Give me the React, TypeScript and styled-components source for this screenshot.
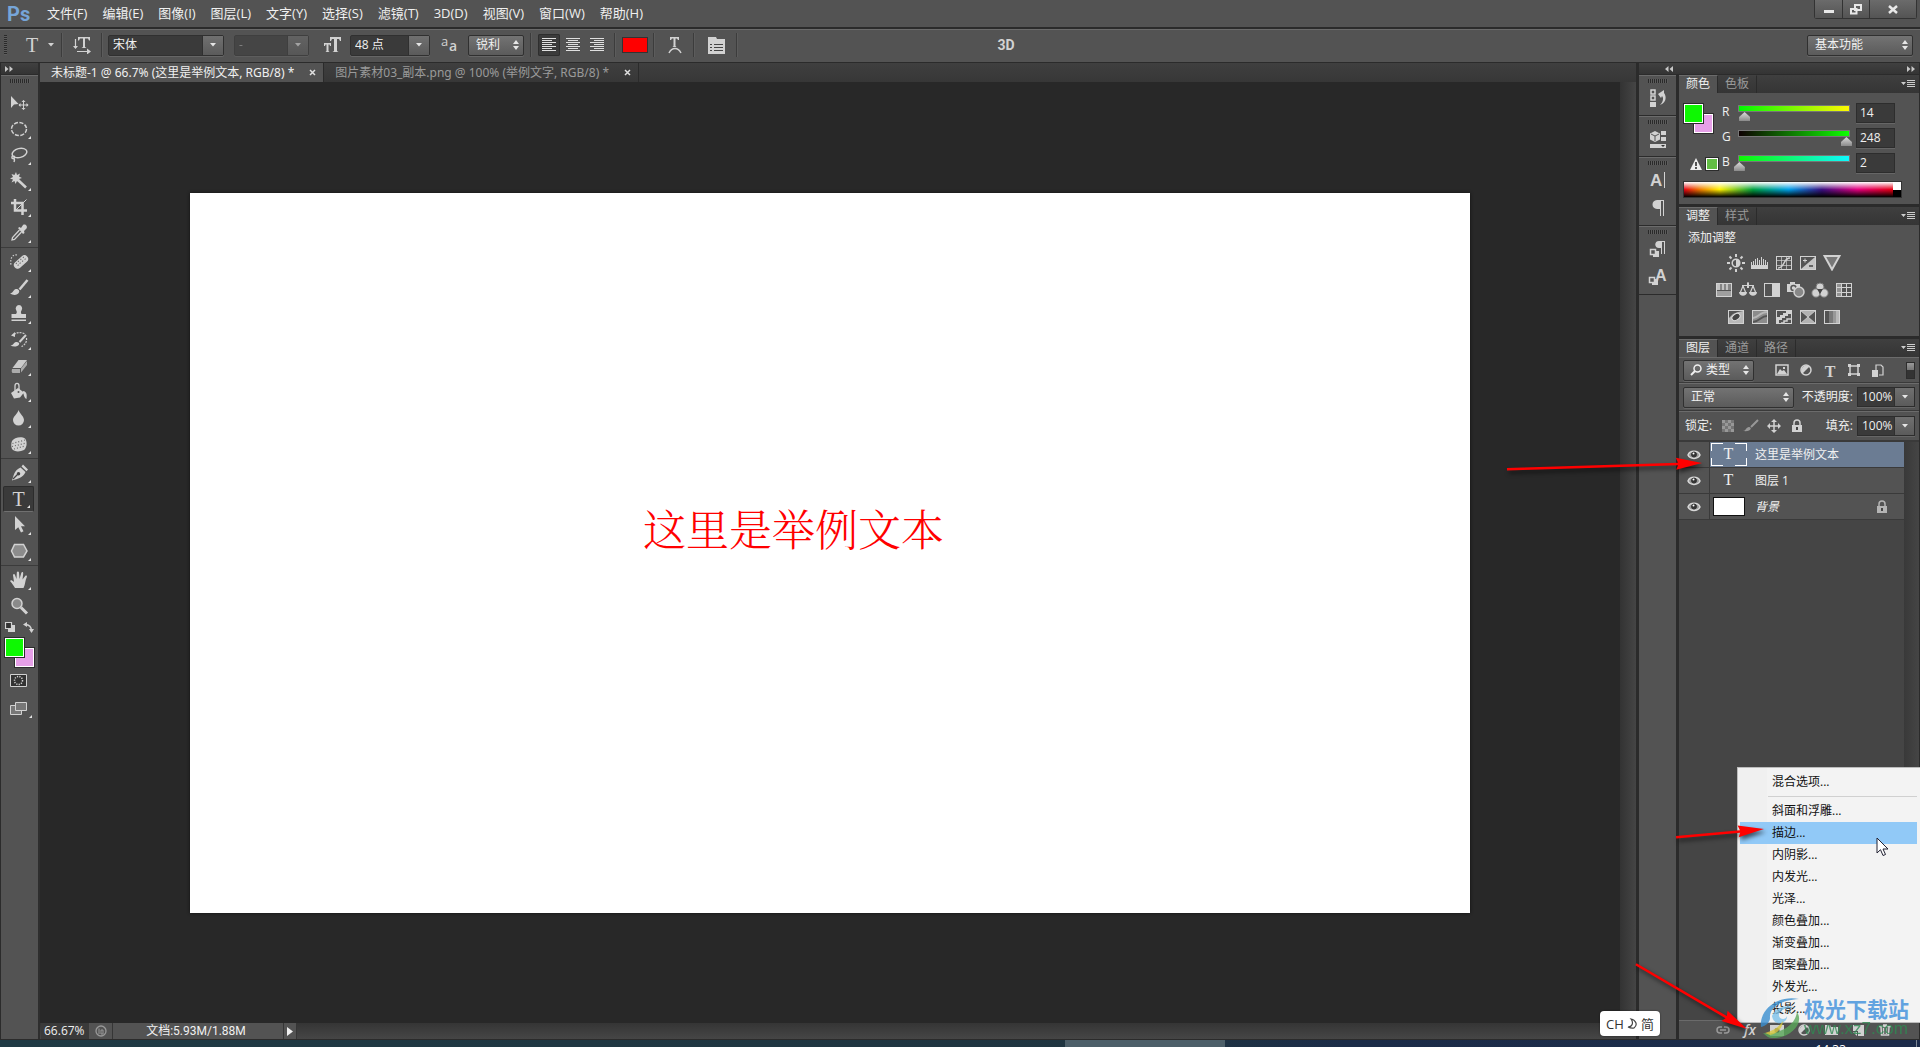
import React from 'react';
import styled, { createGlobalStyle, css } from 'styled-components';

const c = {
  panel: '#535353',
  edge: '#2b2b2b',
  light: '#6b6b6b',
  field: '#3a3a3a',
  icon: '#d2d2d2',
  text: '#f0f0f0',
  dim: '#9a9a9a',
};

const Global = createGlobalStyle`
  * { box-sizing: border-box; }
  html, body, #root { height: 100%; }
  body {
    margin: 0;
    overflow: hidden;
    background: ${c.edge};
    color: ${c.text};
    font: 12px/16px "Open Sans", "Noto Sans CJK SC", sans-serif;
  }
  button, input, select { font: inherit; color: inherit; margin: 0; }
  button { padding: 0; border: 0; background: none; }
  ul { margin: 0; padding: 0; list-style: none; }
  svg { display: block; }
`;

/* ---------- frame ---------- */

const App = styled.div`
  position: relative;
  display: flex;
  flex-direction: column;
  height: 100vh;
  overflow: hidden;
`;

const MenuBar = styled.header`
  display: flex;
  align-items: center;
  height: 29px;
  flex: none;
  padding-left: 7px;
  background: ${c.panel};
  border-bottom: 2px solid ${c.edge};
`;

const Logo = styled.span`
  width: 33px;
  font: 700 20px/24px Roboto, sans-serif;
  color: #76a5d8;
`;

const MenuList = styled.nav`
  display: flex;
  align-items: center;
  padding-bottom: 2px;
  font-size: 13px;
`;

const MenuEntry = styled.button`
  padding: 0 8px 0 7px;
  white-space: nowrap;
`;

const WindowButtons = styled.div`
  display: flex;
  align-self: flex-start;
  margin-left: auto;
  margin-right: 3px;
  height: 19px;
  border: 1px solid #333;
  border-top: 0;
  border-radius: 0 0 3px 3px;
`;

const WindowButton = styled.button<{ $w: number }>`
  display: grid;
  place-items: center;
  width: ${(p) => p.$w}px;
  background: linear-gradient(#6b6b6b, #545454);
  color: #e8e8e8;
  & + & { border-left: 1px solid #333; }
`;

const OptionsBar = styled.div`
  display: flex;
  align-items: center;
  flex: none;
  height: 34px;
  padding: 0 7px 2px 4px;
  background: ${c.panel};
  border-top: 1px solid ${c.light};
  border-bottom: 1px solid ${c.edge};
`;

const Grip = styled.span<{ $upright?: boolean }>`
  display: block;
  flex: none;
  ${(p) =>
    p.$upright
      ? css`width: 3px; height: 20px; background: repeating-linear-gradient(#2a2a2a 0 1px, #5c5c5c 1px 2px);`
      : css`width: 20px; height: 4px; background: repeating-linear-gradient(90deg, #2a2a2a 0 1px, #5c5c5c 1px 2px);`}
`;

const Divider = styled.span`
  width: 2px;
  height: 24px;
  flex: none;
  background: #3c3c3c;
  border-right: 1px solid #5c5c5c;
`;

const Slot = styled.button<{ $w: number }>`
  display: flex;
  align-items: center;
  justify-content: center;
  gap: 10px;
  width: ${(p) => p.$w}px;
  height: 24px;
  flex: none;
  color: ${c.icon};
`;

const TypeSlot = styled(Slot)`padding-left: 12px;`;

const ThreeD = styled(Slot)`
  margin-left: 246px;
  font: 700 14px/16px Roboto, sans-serif;
`;

const Row = styled.div<{ $gap?: number; $pad?: number }>`
  display: flex;
  align-items: center;
  gap: ${(p) => p.$gap ?? 0}px;
  padding: 0 ${(p) => p.$pad ?? 0}px;
`;

const PushRight = styled(Row)`margin-left: auto;`;

const AlignButton = styled.button<{ $on?: boolean }>`
  display: grid;
  place-items: center;
  width: 22px;
  height: 22px;
  border-radius: 2px;
  color: #e0e0e0;
  ${(p) => p.$on && css`background: #3b3b3b; box-shadow: inset 0 0 0 1px #2e2e2e;`}
`;

const TextColour = styled.button`
  width: 26px;
  height: 16px;
  background: #f00;
  border: 1px solid #333;
`;

/* ---------- drop-downs ---------- */

const SelectFrame = styled.span<{ $w: number; $kind: 'field' | 'button'; $off?: boolean }>`
  display: grid;
  grid-template-columns: minmax(0, 1fr) ${(p) => (p.$kind === 'field' ? 21 : 14)}px;
  flex: none;
  width: ${(p) => p.$w}px;
  height: 21px;
  border: 1px solid #303030;
  border-radius: 2px;
  background: ${(p) => (p.$kind === 'field' ? c.field : 'linear-gradient(#737373, #5b5b5b)')};
  box-shadow: 0 1px 0 #666;
  opacity: ${(p) => (p.$off ? 0.55 : 1)};
  & > select {
    grid-area: 1 / 1 / 2 / 3;
    appearance: none;
    width: 100%;
    border: 0;
    padding: 0 0 0 ${(p) => (p.$kind === 'field' ? 4 : 7)}px;
    background: none;
    outline: 0;
    opacity: 1;
  }
  & > select:disabled { color: #aaa; }
`;

const ArrowCell = styled.span<{ $plain?: boolean }>`
  grid-area: 1 / 2 / 2 / 3;
  display: grid;
  place-items: center;
  pointer-events: none;
  color: #e6e6e6;
  ${(p) => !p.$plain && css`background: linear-gradient(#707070, #5b5b5b); border-left: 1px solid #303030;`}
`;

const Down = () => (
  <svg width="6" height="4" viewBox="0 0 6 4"><path d="M0 0h6L3 3.500z" fill="currentColor" /></svg>
);
const UpDown = () => (
  <svg width="6" height="10" viewBox="0 0 6 10"><path d="M0 4 3 0l3 4zM0 6h6l-3 4z" fill="currentColor" /></svg>
);

type SelProps = { label: string; w: number; kind?: 'field' | 'button'; value: string; disabled?: boolean };
const Select = ({ label, w, kind = 'button', value, disabled }: SelProps) => (
  <SelectFrame $w={w} $kind={kind} $off={disabled}>
    <select aria-label={label} disabled={disabled} defaultValue={value}><option>{value}</option></select>
    <ArrowCell $plain={kind === 'button'}>{kind === 'field' ? <Down /> : <UpDown />}</ArrowCell>
  </SelectFrame>
);

/* ---------- workspace ---------- */

const Workspace = styled.div`
  display: flex;
  flex: 1;
  min-height: 0;
  border-bottom: 1px solid ${c.edge};
`;

const ToolColumn = styled.aside`
  display: flex;
  flex-direction: column;
  align-items: center;
  flex: none;
  width: 40px;
  background: ${c.panel};
  border-left: 1px solid ${c.edge};
  border-right: 2px solid #2e2e2e;
`;

const ColumnHead = styled.div`
  display: flex;
  align-items: center;
  justify-content: space-between;
  align-self: stretch;
  flex: none;
  height: 12px;
  padding: 0 4px;
  color: #c8c8c8;
  background: linear-gradient(#404040, #343434);
  border-bottom: 1px solid ${c.edge};
`;

const ToolGrip = styled.div`
  display: flex;
  justify-content: center;
  align-self: stretch;
  height: 15px;
  padding-top: 3px;
  border-top: 1px solid ${c.light};
`;

const ToolGroup = styled.div`
  display: flex;
  flex-direction: column;
  align-items: center;
  align-self: stretch;
  padding-right: 2px;
  & + & { border-top: 1px solid #3b3b3b; margin-top: 1px; padding-top: 1px; }
`;

const Tool = styled.button<{ $on?: boolean }>`
  position: relative;
  display: grid;
  place-items: center;
  width: 31px;
  height: 26px;
  color: ${c.icon};
  ${(p) => p.$on && css`background: #3a3a3a; border: 1px solid #2c2c2c; border-bottom-color: #707070; border-radius: 2px;`}
`;

const Corner = styled.span`
  position: absolute;
  right: 3px;
  bottom: 3px;
  border: solid transparent;
  border-width: 0 0 3px 3px;
  border-bottom-color: #e4e4e4;
`;

const SerifT = styled.span<{ $s: number; $bold?: boolean }>`
  font: ${(p) => (p.$bold ? 700 : 400)} ${(p) => p.$s}px/20px "Liberation Serif", serif;
`;

const ColourTools = styled.div`
  display: flex;
  flex-direction: column;
  align-items: center;
  gap: 1px;
`;

const Minor = styled.div`
  display: flex;
  justify-content: space-between;
  width: 29px;
  height: 18px;
  padding-top: 3px;
  color: ${c.icon};
`;

const Swatches = styled.div`
  display: grid;
  grid-template-columns: 10px 9px 10px;
  grid-template-rows: 10px 9px 10px;
  width: 29px;
  height: 29px;
`;
const Front = styled.button`
  grid-area: 1 / 1 / 3 / 3;
  z-index: 1;
  background: #0ef802;
  border: 1px solid #fff;
  outline: 1px solid #2c2c2c;
`;
const Back = styled.button`
  grid-area: 2 / 2 / 4 / 4;
  background: #e6a0e8;
  border: 1px solid #fff;
  outline: 1px solid #2c2c2c;
`;

const Documents = styled.main`
  display: flex;
  flex-direction: column;
  flex: 1;
  min-width: 0;
`;

const TabStrip = styled.div`
  display: flex;
  flex: none;
  height: 19px;
  background: linear-gradient(#3f3f3f, #373737);
`;

const DocTab = styled.div<{ $on?: boolean }>`
  display: flex;
  align-items: center;
  gap: 15px;
  padding: 0 7px 0 11px;
  font-family: "Noto Sans", "Noto Sans CJK SC", sans-serif;
  white-space: nowrap;
  color: ${(p) => (p.$on ? c.text : c.dim)};
  background: ${(p) => (p.$on ? c.panel : 'transparent')};
  border-right: 1px solid ${c.edge};
`;
const TabClose = styled.button`
  display: grid;
  place-items: center;
  width: 7px;
  height: 7px;
  color: #e0e0e0;
`;

const Stage = styled.div`
  display: grid;
  grid-template-columns: minmax(0, 1fr) 16px;
  flex: 1;
  min-height: 0;
`;
const Pasteboard = styled.div`
  display: flex;
  align-items: center;
  justify-content: center;
  background: #282828;
`;
const Artboard = styled.div`
  position: relative;
  width: 1280px;
  aspect-ratio: 16 / 9;
  flex: none;
  background: #fff;
  box-shadow: 0 0 3px #111;
`;
const TextLayer = styled.p`
  position: absolute;
  left: 453px;
  top: 305px;
  margin: 0;
  color: #f00;
  font: 300 43px/60px "Noto Serif CJK SC", "Noto Sans CJK SC Light", "Noto Sans CJK SC", serif;
  white-space: nowrap;
`;
const VScroll = styled.div`background: linear-gradient(90deg, #333, #454545);`;

const StatusBar = styled.footer`
  display: flex;
  align-items: stretch;
  flex: none;
  height: 16px;
  padding-left: 1px;
  background: linear-gradient(#353535, #464646);
`;
const Zoom = styled.input`
  width: 48px;
  padding: 0 0 0 3px;
  border: 0;
  background: ${c.field};
`;
const StatusButton = styled.button<{ $w: number }>`
  display: grid;
  place-items: center;
  width: ${(p) => p.$w}px;
  background: ${c.panel};
  border-right: 1px solid #363636;
`;
const DocInfo = styled.span`
  width: 171px;
  text-align: center;
  padding-right: 4px;
  font-family: Roboto, "Noto Sans CJK SC", sans-serif;
  background: ${c.panel};
  border-right: 1px solid #363636;
`;

/* ---------- dock ---------- */

const Dock = styled.aside`
  display: flex;
  flex-direction: column;
  flex: none;
  width: 284px;
  border-left: 3px solid ${c.edge};
  border-right: 1px solid ${c.edge};
`;
const DockHead = styled(ColumnHead)`padding: 0 4px 0 26px;`;
const DockBody = styled.div`
  display: flex;
  flex: 1;
  min-height: 0;
`;
const Rail = styled.div`
  width: 40px;
  flex: none;
  background: ${c.panel};
  border-right: 3px solid ${c.edge};
`;
const RailGroup = styled.div`
  display: flex;
  flex-direction: column;
  align-items: center;
  padding: 3px 0;
  border-top: 1px solid ${c.light};
  border-bottom: 1px solid ${c.edge};
`;
const RailButton = styled.button`
  display: grid;
  place-items: center;
  width: 28px;
  height: 28px;
  margin-top: 1px;
  color: ${c.icon};
  & + & { margin-top: 0; }
`;
const Panels = styled.div`
  display: flex;
  flex-direction: column;
  flex: 1;
  min-width: 0;
`;
const Panel = styled.section`
  background: ${c.panel};
  border-bottom: 3px solid ${c.edge};
`;
const LayersPanel = styled(Panel)`
  display: flex;
  flex-direction: column;
  flex: 1;
  min-height: 0;
  border-bottom: 0;
`;
const PanelTabs = styled.div`
  display: flex;
  height: 18px;
  flex: none;
  padding-right: 4px;
  background: linear-gradient(#3f3f3f, #353535);
`;
const PanelTab = styled.button<{ $on?: boolean }>`
  width: 39px;
  padding-bottom: 1px;
  line-height: 16px;
  color: ${(p) => (p.$on ? c.text : c.dim)};
  background: ${(p) => (p.$on ? c.panel : 'transparent')};
  border-top: 1px solid ${(p) => (p.$on ? c.light : '#404040')};
  border-right: 1px solid ${c.edge};
`;
const PanelMenu = styled.button`
  margin-left: auto;
  color: #ccc;
`;

const ColourBody = styled.div`
  height: 111px;
  padding: 7px 24px 0 4px;
`;
const ColourGrid = styled.div`
  display: flex;
  height: 75px;
`;
const ColourSide = styled.div`
  display: flex;
  flex-direction: column;
  justify-content: space-between;
  width: 39px;
  padding: 4px 0 5px 1px;
`;
const Gamut = styled.div`
  display: flex;
  align-items: center;
  justify-content: flex-end;
  gap: 4px;
  padding-right: 4px;
`;
const GamutSwatch = styled.button`
  width: 12px;
  height: 12px;
  background: #63be45;
  border: 1px solid #fff;
  outline: 1px solid #2c2c2c;
`;
const Channels = styled.div`flex: 1;`;
const Channel = styled.div`
  display: flex;
  align-items: center;
  height: 25px;
`;
const ChannelName = styled.label`
  width: 16px;
  height: 18px;
`;
const Track = styled.div<{ $from: string; $to: string }>`
  flex: 1;
  height: 7px;
  margin: 0 6px 8px 0;
  border: 1px solid #777;
  background: linear-gradient(90deg, ${(p) => p.$from}, ${(p) => p.$to});
`;
const Slider = styled.input`
  display: block;
  appearance: none;
  width: calc(100% + 12px);
  height: 9px;
  margin: 6px -6px 0;
  background: none;
  &::-webkit-slider-thumb {
    appearance: none;
    width: 11px;
    height: 9px;
    background: linear-gradient(#dcdcdc, #8a8a8a);
    clip-path: polygon(50% 0, 100% 55%, 100% 100%, 0 100%, 0 55%);
  }
`;
const Num = styled.input`
  width: 39px;
  height: 20px;
  padding: 0 3px;
  background: ${c.field};
  border: 1px solid #2d2d2d;
  box-shadow: 0 1px 0 #666;
`;
const Spectrum = styled.div`
  display: flex;
  height: 17px;
  margin-top: 6px;
  margin-right: -7px;
  border: 1px solid #333;
`;
const Hues = styled.div`
  flex: 1;
  background:
    linear-gradient(#fff, #fff0 50%, #0000 50%, #000),
    linear-gradient(90deg, #e60012, #f08000 8%, #fff000 17%, #00a040 33%, #00a0e9 50%, #3a1080 66%, #e4007f 83%, #e60012);
`;
const Ends = styled.div`
  width: 8px;
  background: linear-gradient(#fff 50%, #000 50%);
`;

const AdjustBody = styled.div`
  height: 111px;
  padding: 5px 15px 0 9px;
`;
const AdjustGrid = styled.div`padding-top: 3px;`;
const AdjustRow = styled.div`
  display: flex;
  justify-content: center;
  gap: 4px;
  height: 27px;
  padding-right: 24px;
`;
const AdjustIcon = styled.button`
  display: grid;
  place-items: center;
  width: 20px;
  color: ${c.icon};
`;

const Bar = styled.div<{ $h: number }>`
  display: flex;
  align-items: center;
  flex: none;
  height: ${(p) => p.$h}px;
  padding: 0 4px;
  border-top: 1px solid ${c.light};
  border-bottom: 1px solid #3a3a3a;
`;
const IconRow = styled.div<{ $gap: number }>`
  display: flex;
  align-items: center;
  gap: ${(p) => p.$gap}px;
  color: ${c.icon};
`;
const LockRow = styled(IconRow)`margin-left: 6px;`;
const IconBtn = styled.button<{ $faint?: boolean }>`
  display: grid;
  place-items: center;
  width: 16px;
  height: 16px;
  color: ${c.icon};
  opacity: ${(p) => (p.$faint ? 0.55 : 1)};
`;
const FilterSwitch = styled.button`
  width: 9px;
  height: 17px;
  margin-left: auto;
  background: linear-gradient(#999, #777 45%, #333 50%);
  border: 1px solid #2d2d2d;
`;
const FilterSelect = styled.div`
  display: grid;
  margin-right: 20px;
  & > * { grid-area: 1 / 1 / 2 / 2; }
  & > svg { align-self: center; margin-left: 7px; z-index: 1; pointer-events: none; }
  select { padding-left: 22px; }
`;
const FieldLabel = styled.label`
  margin-left: auto;
  margin-right: 4px;
`;
const Percent = styled.div`
  display: grid;
  grid-template-columns: 36px 20px;
  height: 20px;
  border: 1px solid #2d2d2d;
  box-shadow: 0 1px 0 #666;
  & > input { width: 36px; border: 0; padding: 0 0 0 4px; background: ${c.field}; }
`;
const PercentDrop = styled.button`
  display: grid;
  place-items: center;
  background: linear-gradient(#707070, #5b5b5b);
  border-left: 1px solid #303030;
  color: #e6e6e6;
`;

const LayerArea = styled.div`
  display: grid;
  grid-template-columns: minmax(0, 1fr) 15px;
  flex: 1;
  min-height: 0;
  border-top: 1px solid #3a3a3a;
`;
const LayerList = styled.ul`background: #454545;`;
const LayerScroll = styled.div`background: linear-gradient(90deg, #393939, #454545);`;
const Layer = styled.li<{ $on?: boolean }>`
  display: grid;
  grid-template-columns: 31px minmax(0, 1fr);
  height: 26px;
  background: ${c.panel};
  border-bottom: 1px solid #3a3a3a;
  & > div { background: ${(p) => (p.$on ? '#6b7c93' : 'transparent')}; }
`;
const Eye = styled.button`
  display: grid;
  place-items: center;
  color: #d8d8d8;
  border-right: 1px solid #3a3a3a;
`;
const LayerMain = styled.div`
  display: flex;
  align-items: center;
  padding-right: 16px;
  & > svg { color: #b4b4b4; }
`;
const Thumb = styled.span<{ $on?: boolean }>`
  display: grid;
  place-items: center;
  width: 36px;
  height: 23px;
  margin: 0 8px 0 1px;
  padding-bottom: 2px;
  padding-right: 1px;
  ${(p) =>
    p.$on &&
    css`
      background:
        linear-gradient(#fff, #fff) 0 0 / 12px 1px, linear-gradient(#fff, #fff) 100% 0 / 12px 1px,
        linear-gradient(#fff, #fff) 0 100% / 12px 1px, linear-gradient(#fff, #fff) 100% 100% / 12px 1px,
        linear-gradient(#fff, #fff) 0 0 / 1px 8px, linear-gradient(#fff, #fff) 100% 0 / 1px 8px,
        linear-gradient(#fff, #fff) 0 100% / 1px 8px, linear-gradient(#fff, #fff) 100% 100% / 1px 8px;
      background-repeat: no-repeat;
    `}
`;
const PictureThumb = styled(Thumb)`padding: 0;`;
const WhiteThumb = styled.span`
  width: 32px;
  height: 19px;
  background: #fff;
  border: 1px solid #111;
`;
const LayerName = styled.span<{ $italic?: boolean }>`
  flex: 1;
  font-style: ${(p) => (p.$italic ? 'italic' : 'normal')};
`;
const LayerFoot = styled.div`
  display: flex;
  align-items: center;
  justify-content: flex-end;
  gap: 11px;
  flex: none;
  height: 19px;
  padding-right: 26px;
  background: ${c.panel};
  border-top: 1px solid ${c.light};
`;
const Fx = styled.em`font: italic 600 14px/16px "Open Sans", sans-serif;`;

/* ---------- overlays ---------- */

const ContextMenu = styled.div`
  position: absolute;
  right: 0;
  bottom: 24px;
  width: 183px;
  padding: 3px 3px 2px 2px;
  color: #111;
  background: linear-gradient(90deg, #f0f0f0 29px, #f3f3f3 29px);
  border: 1px solid #bbb;
  border-right: 0;
`;
const MenuItem = styled.button<{ $on?: boolean }>`
  display: block;
  width: 100%;
  height: 22px;
  padding-left: 32px;
  text-align: left;
  background: ${(p) => (p.$on ? '#91c9f7' : 'transparent')};
`;
const MenuRule = styled.hr`
  height: 1px;
  margin: 3px 0 3px 28px;
  border: 0;
  background: #d0d0d0;
`;
const Cursor = styled.svg`
  position: absolute;
  right: 31px;
  bottom: 190px;
`;
const Annotations = styled.svg`
  position: absolute;
  right: 0;
  bottom: 0;
  pointer-events: none;
  filter: drop-shadow(2px 3px 2px #0009);
`;
const Ime = styled.div`
  position: absolute;
  right: 260px;
  bottom: 11px;
  display: flex;
  align-items: center;
  justify-content: center;
  gap: 3px;
  width: 60px;
  height: 25px;
  font-size: 13px;
  color: #333;
  background: #fff;
  border-radius: 4px;
  box-shadow: 0 0 2px #0008;
`;
const Watermark = styled.div`
  position: absolute;
  right: 9px;
  bottom: 9px;
  display: flex;
  align-items: center;
  pointer-events: none;
`;
const WaterText = styled.div`
  display: flex;
  flex-direction: column;
  width: 107px;
  white-space: nowrap;
`;
const WaterName = styled.span`
  margin-top: -2px;
  font: 700 21px/26px "Noto Sans CJK SC", sans-serif;
  color: #62a3e0;
`;
const WaterUrl = styled.span`
  font: 400 17px/16px "Liberation Sans", sans-serif;
  color: #2f8a52;
  opacity: 0.8;
`;
const Taskbar = styled.div`
  display: flex;
  flex: none;
  height: 7px;
  overflow: hidden;
  background: linear-gradient(90deg, #1f3a44, #1f3440 60%, #1b2c48 70%, #1c2b4a);
`;
const TaskTile = styled.span`
  width: 160px;
  margin-left: 1065px;
  background: #4d5f69;
`;
const Clock = styled.span`
  margin: 2px 70px 0 auto;
  color: #fff;
`;
const ShowDesktop = styled.span`
  width: 4px;
  border-left: 1px solid #7d8795;
`;

/* ---------- icons ---------- */

const I = ({ s = 20, h, children }: { s?: number; h?: number; children: React.ReactNode }) => (
  <svg width={s} height={h ?? s} viewBox={`0 0 ${s} ${h ?? s}`} fill="none" stroke="currentColor" strokeWidth="1.5">{children}</svg>
);
const F = (p: React.SVGProps<SVGPathElement>) => <path fill="currentColor" stroke="none" {...p} />;

const Chevrons = ({ left }: { left?: boolean }) => (
  <I s={8} h={6}><F d={left ? 'M3.5 0v6L0 3zM8 0v6L4.500 3z' : 'M0 0v6l3.500-3zM4.500 0v6L8 3z'} /></I>
);
const Lines = () => <I s={14} h={8}><F d="M0 2h5L2.500 5zM6 0h8v1H6zM6 2h8v1H6zM6 4h8v1H6zM6 6h8v1H6z" /></I>;
const Cross = () => <I s={7}><path d="m1 1 5 5M6 1 1 6" /></I>;

const icons: Record<string, React.ReactNode> = {
  move: <I><F d="M2 3v12l3-3.500 4.500-.5z" /><path d="M14.500 7.500v9M10 12h9" strokeWidth="1" /><F d="m14.500 7 2 2h-4zM14.500 17l2-2h-4zM9.500 12l2-2v4zM19.500 12l-2-2v4z" /></I>,
  marquee: <I><ellipse cx="10" cy="10" rx="7.500" ry="6.500" strokeDasharray="4 1.500" /></I>,
  lasso: <I><ellipse cx="10.500" cy="8" rx="7.500" ry="4.500" transform="rotate(-14 10.500 8)" /><path d="M4 10.500c-2 1.500-1 3.500.5 3s1.500-2 0-2.500M5 13.500c1 1.500.5 2.500 0 3.500" /></I>,
  wand: <I><F d="m7 1 1 3 3-1.500L10 5.500 13 7l-3 1 1 3-3-1-1.500 3L5.500 10l-3 1.500L4 8.500 1 7.500l3-1.500L2.500 3l3 1z" /><path d="m9 9 8 7.500" strokeWidth="2.500" /></I>,
  crop: <I><path d="M6 2v11.500h12M2 6h11.500v12" strokeWidth="2.500" /><path d="M7 13 17.500 2.500" strokeWidth="1" /></I>,
  dropper: <I><path d="m10.500 7-7 7.500-.5 2.500 2.500-.5 7-7.500" strokeWidth="1.300" /><F d="m9 5 1.500-1 1.500 1 2-3c2-1.500 5 1 3.500 3.500L15 8l.5 2-1.500 1z" /></I>,
  heal: <I><rect x="4.500" y="7" width="15" height="6" rx="3" transform="rotate(-42 12 10)" fill="currentColor" /><path d="M8 3C3 2 1 7 2 13" strokeDasharray="1.500 1.500" strokeWidth="1.200" /><path d="m7 11 3 3M9 9l3 3M11.500 7l3 3M14 5l3 3" stroke="#666" strokeWidth="1.200" strokeDasharray="1 1.500" /></I>,
  brush: <I><path d="m18.500 2-8 9.500" strokeWidth="2.500" /><F d="M1 15.500c3 0 3-4 6-4.500 2-.3 4 1.500 3 3.500-1.500 3-6 3-9 1z" /></I>,
  stamp: <I><F d="M10 1a3.500 3.500 0 0 1 2.500 5.500C11.500 8 12 9 12.500 10H17v4H2.500v-4H7c.8-1 1.200-2 .3-3.500A3.500 3.500 0 0 1 10 1zM2.500 15.500H17V17H2.500z" /></I>,
  history: <I><path d="m17 5-6.500 7" strokeWidth="2" /><F d="M1.500 15.500c3 0 3-3 5.500-3.500 2-.3 4 1 3 2.500-1.500 2.500-6 2.500-8.500 1zM2 5.500 6 2v5z" /><path d="M5 4.500c3-2.500 7-2.500 11-.5M17.500 8c.5 4-1.500 7-5 8.500" strokeWidth="1.200" strokeDasharray="2 1" /></I>,
  eraser: <I><F d="M9.500 4H18l-6 8H3.500z" opacity=".95" /><F d="M3 13h8v4H4c-1.500 0-1.500-2-1-4zM12 12.500 18 5v4l-6 7.500z" opacity=".7" /></I>,
  bucket: <I><F d="m2 11 7-5 6 4.500-4 5-6 1zM14 9c4 .5 4 4 3.500 8-2.500-1-3-5-3.500-8z" /><path d="M6 9V4c0-3.500 4-3.500 4 0v5" strokeWidth="1.300" /><circle cx="9.500" cy="10" r="1" fill="#555" stroke="none" /></I>,
  blur: <I><F d="M9.500 2c1.500 4 5.500 6.500 5.500 10a5.500 5.500 0 0 1-11 0C4 8.500 8.500 6 9.500 2z" /></I>,
  sponge: <I><F d="M3 7c2-4 10-5 13-2.500 2.500 3 2 9-1 11.500-4 2-10 2-12-1-1-2-1-6 0-8z" /><path d="M3.500 9.500 16 6M3 12.500 17 9M5 15l11-3" stroke="#666" strokeWidth="1.200" strokeDasharray="1 2" /></I>,
  pen: <I><F d="m11.500 4.500 5 4.500C14 15 9 15.500 3 17.500c2-5.500 2-10 8.500-13zM12.500 3.500 14 1.500l5 5-1.500 1.800z" /><path d="m4 16 5-5" stroke="#444" strokeWidth="1.200" /><circle cx="9.500" cy="10.700" r="1" fill="#444" stroke="#444" /></I>,
  pick: <I><F d="M6 1v14l3.300-2.800L12 17.500l2.500-1.200-2.500-5h4z" /></I>,
  poly: <I><path d="M5.500 3.500h9L18 10l-3.500 6h-9L2.500 10z" fill="#8c8c8c" /></I>,
  hand: <I><F d="M6 18c-1-2-3-4.500-5-7 .8-1.500 2-1 4 1L4 5c.3-1.500 1.700-1.300 2 0l1.500 4L7.800 2.500c.3-1.500 2-1.500 2.200 0L10.500 9l1.800-6c.5-1.500 2-1 1.900.4L13.500 9.500l2.700-3.500c1-1 2.200-.3 1.600 1C16 11 16.500 14 14.500 18z" /></I>,
  zoom: <I><circle cx="8" cy="7.500" r="5" fill="#8a8a8a" /><path d="m12 11.500 6 6" strokeWidth="3" /></I>,
  mini: <I s={10}><F d="M3 3h7v7H3z" /><path d="M.5.5h6v6h-6z" fill="#333" strokeWidth="1.200" /></I>,
  swap: <I s={11}><path d="M2 2.500c4 0 6.500 2 6.500 7" /><F d="M4 0v5L0 2.500zM6 7h5l-2.500 4z" /></I>,
  mask: <I><path d="M.5 3.500h16v12H.5z" fill="#333" strokeWidth="1" /><circle cx="8.500" cy="9.500" r="4" strokeDasharray="1.200 1.200" /></I>,
  screen: <I><path d="M.5 7.500h11v9H.5z" fill="#777" strokeWidth="1" /><path d="M5.500 4.500h11v8h-11z" fill="#777" strokeWidth="1" /></I>,
};

const toolGroups = [
  [['移动', 'move'], ['选框', 'marquee'], ['套索', 'lasso'], ['魔棒', 'wand'], ['裁剪', 'crop'], ['吸管', 'dropper']],
  [['修复', 'heal'], ['画笔', 'brush'], ['图章', 'stamp'], ['历史', 'history'], ['橡皮', 'eraser'], ['油漆桶', 'bucket'], ['模糊', 'blur'], ['海绵', 'sponge']],
  [['钢笔', 'pen'], ['文字', 'type'], ['选择', 'pick'], ['多边形', 'poly']],
  [['抓手', 'hand'], ['缩放', 'zoom']],
];

const Box = ({ children, w = 16 }: { children?: React.ReactNode; w?: number }) => (
  <I s={w} h={14}>{children}<rect x=".5" y=".5" width={w - 1} height="13" strokeWidth="1" /></I>
);

const adjustments: [string, React.ReactNode][][] = [
  [
    ['亮度', <I s={18}><circle cx="9" cy="9" r="3.800" /><F d="M9 5a4 4 0 0 1 0 8z" /><path d="M9 0v3M9 15v3M0 9h3M15 9h3M2.500 2.500l2 2M13.500 13.500l2 2M2.500 15.500l2-2M13.500 4.500l2-2" strokeWidth="2" /></I>],
    ['色阶', <I s={18} h={12}><F d="M0 12V5h1v3h1V4h1v4h1V2h1v6h1V1h1v7h1V3h1v5h1V0h1v8h1V2h1v6h1V3h1v5h1V5h1v7z" /></I>],
    ['曲线', <Box><path d="M5.500 1v12M10.500 1v12M1 4.500h14M1 9.500h14" strokeWidth="1" opacity=".7" /><path d="M2 12c7 0 5-10 12-10" /></Box>],
    ['曝光度', <Box><F d="M1 13 15 1v12z" opacity=".9" /><path d="M3 4.500h4M5 2.500v4" strokeWidth="1" /><path d="M9 10h4" stroke="#444" /></Box>],
    ['自然饱和度', <I s={18} h={16}><path d="M1.500 1h15L9 14.500z" fill="#777" strokeWidth="2" /></I>],
  ],
  [
    ['色相', <Box><F d="M1 8h14v5H1z" opacity=".6" /><F d="M1 1h3v6H1zM6 1h2v6H6zM10 1h2v6h-2z" opacity=".8" /><F d="M1 1h14v6H1z" opacity=".4" /></Box>],
    ['色彩平衡', <I s={18} h={15}><path d="M9 0v3M3 3.500h12M4 4 1.500 10M4 4l2.500 6M14 4l-2.500 6M14 4l2.500 6" strokeWidth="1.200" /><F d="M0 10h8c0 5-8 5-8 0zM10 10h8c0 5-8 5-8 0zM8 1h2v5H8z" /></I>],
    ['黑白', <Box><F d="M8 1h7v12H8z" /></Box>],
    ['照片滤镜', <I s={18} h={16}><F d="M0 2h3V0h5v2h5v8H0z" /><circle cx="6.500" cy="6" r="2.500" stroke="#555" /><circle cx="12" cy="10" r="5" fill="#888" /></I>],
    ['通道混合器', <I s={18} h={16}><circle cx="9" cy="5" r="4" fill="currentColor" stroke="#777" strokeWidth="1" /><circle cx="5" cy="11" r="4.200" fill="currentColor" stroke="#777" strokeWidth="1" /><circle cx="13" cy="11" r="4.200" fill="currentColor" stroke="#777" strokeWidth="1" /><F d="m9 12-3-5h6z" fill="#444" /></I>],
    ['颜色查找', <Box><path d="M5.500 1v12M10.500 1v12M1 4.500h14M1 9.500h14" strokeWidth="1" /><F d="M1 1h5v12H1z" opacity=".5" /></Box>],
  ],
  [
    ['反相', <Box><F d="M1 13V8l4-4 5-2 5-1v12z" opacity=".8" /><ellipse cx="8" cy="7" rx="4.500" ry="3" transform="rotate(-35 8 7)" fill="#444" stroke="#ddd" strokeWidth="1" /></Box>],
    ['色调分离', <Box><F d="M1 1h14v12H1z" opacity=".45" /><path d="M1 8c6 0 6-6 14-6" strokeWidth="2" opacity=".6" /><path d="M1 12c7-1 8-6 14-6" strokeWidth="2" stroke="#555" /></Box>],
    ['阈值', <Box><F d="M1 7h3V5h3V3h3V1h5v3h-3v2H9v2H6v2H3v3H1z" /><path d="M5 13h3v-2h3V9h4" /></Box>],
    ['可选颜色', <Box><F d="m1 1 7 6 7-6zM1 13l7-6 7 6z" opacity=".75" /><path d="m1 1 14 12M15 1 1 13" strokeWidth=".8" /></Box>],
    ['渐变映射', <Box><F d="M5 1h4v12H5z" opacity=".3" /><F d="M9 1h3v12H9z" opacity=".55" /><F d="M12 1h3v12h-3z" opacity=".8" /></Box>],
  ],
];

const EyeIcon = () => (
  <I s={14} h={11}><path d="M1 6C3 1 11 1 13 6 11 10.500 3 10.500 1 6z" fill="#999" /><circle cx="7" cy="5.500" r="2.500" fill="#333" stroke="#333" strokeWidth="1" /><circle cx="6.500" cy="4.500" r="1" fill="#fff" stroke="none" /></I>
);
const LockIcon = () => (
  <I s={12} h={14}><path d="M3 6V4c0-4 6-4 6 0v2" /><F d="M1 6h10v7H1z" /><F d="M5 8h2v3H5z" fill="#444" /></I>
);
const Search = () => <I s={12}><circle cx="7.500" cy="4.500" r="3.500" /><path d="M5 7 1 11" strokeWidth="2" /></I>;
const AlignIcon = ({ a }: { a: 'l' | 'c' | 'r' }) => (
  <I s={14} h={14}>
    {[14, 10, 14, 10, 14, 10, 14].map((w, i) => (
      <rect key={i} x={a === 'l' ? 0 : a === 'c' ? (14 - w) / 2 : 14 - w} y={i * 2} width={w} height="1" fill="currentColor" stroke="none" />
    ))}
  </I>
);

const channels: [string, number, string, string][] = [
  ['R', 14, '#00f802', '#fff802'],
  ['G', 248, '#0e0002', '#0eff02'],
  ['B', 2, '#0ef800', '#0ef8ff'],
];

const effects = ['斜面和浮雕...', '描边...', '内阴影...', '内发光...', '光泽...', '颜色叠加...', '渐变叠加...', '图案叠加...', '外发光...', '投影...'];

const Arrow = ({ x1, y1, x2, y2 }: { x1: number; y1: number; x2: number; y2: number }) => {
  const len = Math.hypot(x2 - x1, y2 - y1);
  const deg = (Math.atan2(y2 - y1, x2 - x1) * 180) / Math.PI;
  return (
    <path transform={`translate(${x1} ${y1}) rotate(${deg})`} d={`M0-1H${len - 24}L${len - 26}-6 ${len} 0 ${len - 26} 6 ${len - 24} 1.500H0z`} fill="#f00" />
  );
};

export default function Photoshop() {
  return (
    <App>
      <Global />
      <MenuBar>
        <Logo>Ps</Logo>
        <MenuList>
          {['文件(F)', '编辑(E)', '图像(I)', '图层(L)', '文字(Y)', '选择(S)', '滤镜(T)', '3D(D)', '视图(V)', '窗口(W)', '帮助(H)'].map((m) => (
            <MenuEntry key={m}>{m}</MenuEntry>
          ))}
        </MenuList>
        <WindowButtons>
          <WindowButton $w={27} aria-label="最小化"><I s={10} h={10}><F d="M0 6h10v3H0z" /></I></WindowButton>
          <WindowButton $w={27} aria-label="还原"><I s={12} h={11}><path d="M5 1h6v5H5zM1 5h5.500v4.500H1z" strokeWidth="2" /></I></WindowButton>
          <WindowButton $w={47} aria-label="关闭"><I s={10} h={9}><path d="m1 1 8 7M9 1 1 8" strokeWidth="2.500" /></I></WindowButton>
        </WindowButtons>
      </MenuBar>

      <OptionsBar>
        <Grip $upright />
        <TypeSlot $w={54} aria-label="文字工具"><SerifT $s={20}>T</SerifT><Down /></TypeSlot>
        <Divider />
        <Slot $w={38} aria-label="切换文本取向">
          <I s={18}><path d="M2.500 3v9M4 15.500h11" strokeWidth="1.200" /><F d="M0 10h5l-2.500 3zM14 12.500v6l4-3zM5 1h12v3.500h-1L15 2.500h-3V11l1.500 1h-5L10 11V2.500H7L6 4.500H5z" /></I>
        </Slot>
        <Divider />
        <Row $gap={10} $pad={5}>
          <Select label="字体" w={116} kind="field" value="宋体" />
          <Select label="字体样式" w={75} kind="field" value="-" disabled />
        </Row>
        <Slot $w={36} aria-label="字号">
          <I s={17} h={16}><F d="M6 0h11v4h-1l-1-2h-2v12l1.500 1h-6L10 14V2H8L7 4H6zM0 6h7v3H6L5.500 7.500h-1V14l1 1h-4l1-1V7.500h-1L1 9H0z" /></I>
        </Slot>
        <Select label="字号" w={80} kind="field" value="48 点" />
        <Slot $w={38} aria-label="消除锯齿">
          <svg width="17" height="18" fill="currentColor" fontFamily="Open Sans, sans-serif">
            <text x="0" y="10" fontSize="13">a</text><text x="8" y="15" fontSize="14" fontWeight="600">a</text>
          </svg>
        </Slot>
        <Select label="消除锯齿方法" w={56} value="锐利" />
        <Row $pad={6}><Divider /></Row>
        <Row $gap={2}>
          <AlignButton $on aria-label="左对齐"><AlignIcon a="l" /></AlignButton>
          <AlignButton aria-label="居中"><AlignIcon a="c" /></AlignButton>
          <AlignButton aria-label="右对齐"><AlignIcon a="r" /></AlignButton>
        </Row>
        <Row $pad={6}><Divider /></Row>
        <TextColour aria-label="文本颜色" />
        <Row $pad={5}><Divider /></Row>
        <Slot $w={30} aria-label="变形文字"><I s={16} h={18}><path d="M2 17c3-6 9-6 12 0" /><F d="M3 1h9v3h-1l-1-1.500H8.500V10l1 1h-4l1-1V2.500H5L4 4H3z" /></I></Slot>
        <Row $pad={3}><Divider /></Row>
        <Slot $w={36} aria-label="字符面板"><I s={17} h={17}><F d="M0 0h8l1 2h8v15H0z" /><path d="M2 7.500h2M6 7.500h9M2 10.500h2M6 10.500h9M2 13.500h2M6 13.500h9" stroke="#444" strokeWidth="1" /></I></Slot>
        <Row $pad={2}><Divider /></Row>
        <ThreeD $w={40}>3D</ThreeD>
        <PushRight><Select label="工作区" w={106} value="基本功能" /></PushRight>
      </OptionsBar>

      <Workspace>
        <ToolColumn>
          <ColumnHead><Chevrons /></ColumnHead>
          <ToolGrip><Grip /></ToolGrip>
          {toolGroups.map((g, i) => (
            <ToolGroup key={i}>
              {g.map(([name, id]) => (
                <Tool key={id} $on={id === 'type'} aria-label={name}>
                  {id === 'type' ? <SerifT $s={20}>T</SerifT> : icons[id]}
                  {id !== 'move' && id !== 'zoom' && <Corner />}
                </Tool>
              ))}
            </ToolGroup>
          ))}
          <ColourTools>
            <Minor>{icons.mini}{icons.swap}</Minor>
            <Swatches><Front aria-label="前景色" /><Back aria-label="背景色" /></Swatches>
            <Tool aria-label="快速蒙版">{icons.mask}</Tool>
            <Tool aria-label="屏幕模式">{icons.screen}<Corner /></Tool>
          </ColourTools>
        </ToolColumn>

        <Documents>
          <TabStrip>
            <DocTab $on>未标题-1 @ 66.7% (这里是举例文本, RGB/8) *<TabClose aria-label="关闭"><Cross /></TabClose></DocTab>
            <DocTab>图片素材03_副本.png @ 100% (举例文字, RGB/8) *<TabClose aria-label="关闭"><Cross /></TabClose></DocTab>
          </TabStrip>
          <Stage>
            <Pasteboard><Artboard><TextLayer>这里是举例文本</TextLayer></Artboard></Pasteboard>
            <VScroll />
          </Stage>
          <StatusBar>
            <Zoom aria-label="缩放比例" defaultValue="66.67%" />
            <StatusButton $w={24} aria-label="状态"><I s={12}><circle cx="6" cy="6" r="5" stroke="#999" strokeWidth="1.300" /><path d="M4 9V3.500M6 9V5h2v4z" stroke="#999" strokeWidth="1" /></I></StatusButton>
            <DocInfo>文档:5.93M/1.88M</DocInfo>
            <StatusButton $w={13} aria-label="更多"><I s={6} h={9}><F d="M0 0v9l6-4.500z" /></I></StatusButton>
          </StatusBar>
        </Documents>

        <Dock>
          <DockHead><Chevrons left /><Chevrons /></DockHead>
          <DockBody>
            <Rail>
              <RailGroup><Grip /><RailButton aria-label="历史记录"><I s={16} h={18}><path d="M1 1h4v4H1zM1 7h4v4H1z" /><F d="M0 13h6v5H0zM8 5l6-4v3c3 4 2 10-4 12 3-3 4-7 2-9l-1 2z" /></I></RailButton></RailGroup>
              <RailGroup><Grip /><RailButton aria-label="属性"><I s={16} h={18}><F d="m5 1 5 2.500v6L5 12 0 9.500v-6zM11 1h5v4h-5zM11 7h5v4h-5zM0 14h16v4H0z" /><path d="m1 4 4 2 4-2M5 6v5" stroke="#555" strokeWidth="1" /><F d="M11 15h4l-2 2z" fill="#333" /></I></RailButton></RailGroup>
              <RailGroup>
                <Grip />
                <RailButton aria-label="字符"><I s={16} h={18}><path d="M14.500 1v16" strokeWidth="1" /><text x="0" y="15" fontFamily="Liberation Sans" fontSize="17" fontWeight="700" fill="currentColor" stroke="none">A</text></I></RailButton>
                <RailButton aria-label="段落"><I s={14} h={16}><F d="M6 0h7v16h-1V1h-2v15H9V9H6C0 9 0 0 6 0z" /></I></RailButton>
              </RailGroup>
              <RailGroup>
                <Grip />
                <RailButton aria-label="段落样式"><I s={18}><F d="M10 1h6v13h-1V2h-2v12h-1V8h-2C5 8 5 1 10 1z" /><F d="M4 11h6v6H4z" /><path d="M1.500 9.500h5v5h-5z" fill="#555" /></I></RailButton>
                <RailButton aria-label="字符样式"><I s={20}><text x="7" y="14" fontFamily="Liberation Sans" fontSize="16" fontWeight="700" fill="currentColor" stroke="none">A</text><F d="M4 12h6v6H4z" /><path d="M1.500 10.500h5v5h-5z" fill="#555" /></I></RailButton>
              </RailGroup>
            </Rail>

            <Panels>
              <Panel>
                <PanelTabs><PanelTab $on>颜色</PanelTab><PanelTab>色板</PanelTab><PanelMenu aria-label="菜单"><Lines /></PanelMenu></PanelTabs>
                <ColourBody>
                  <ColourGrid>
                    <ColourSide>
                      <Swatches><Front aria-label="前景色" /><Back aria-label="背景色" /></Swatches>
                      <Gamut><I s={12}><F d="M6 0l6 12H0z" /><path d="M6 4v4M6 9v2" stroke="#222" /></I><GamutSwatch aria-label="色域" /></Gamut>
                    </ColourSide>
                    <Channels>
                      {channels.map(([n, v, a, b]) => (
                        <Channel key={n}>
                          <ChannelName htmlFor={`ch${n}`}>{n}</ChannelName>
                          <Track $from={a} $to={b}><Slider type="range" min={0} max={255} defaultValue={v} aria-label={`${n} 滑块`} /></Track>
                          <Num id={`ch${n}`} defaultValue={v} />
                        </Channel>
                      ))}
                    </Channels>
                  </ColourGrid>
                  <Spectrum><Hues /><Ends /></Spectrum>
                </ColourBody>
              </Panel>

              <Panel>
                <PanelTabs><PanelTab $on>调整</PanelTab><PanelTab>样式</PanelTab><PanelMenu aria-label="菜单"><Lines /></PanelMenu></PanelTabs>
                <AdjustBody>
                  添加调整
                  <AdjustGrid>
                    {adjustments.map((r, i) => (
                      <AdjustRow key={i}>{r.map(([n, ic]) => <AdjustIcon key={n} aria-label={n}>{ic}</AdjustIcon>)}</AdjustRow>
                    ))}
                  </AdjustGrid>
                </AdjustBody>
              </Panel>

              <LayersPanel>
                <PanelTabs><PanelTab $on>图层</PanelTab><PanelTab>通道</PanelTab><PanelTab>路径</PanelTab><PanelMenu aria-label="菜单"><Lines /></PanelMenu></PanelTabs>
                <Bar $h={26}>
                  <FilterSelect><Search /><Select label="筛选" w={71} value="类型" /></FilterSelect>
                  <IconRow $gap={8}>
                    <IconBtn aria-label="像素"><I s={14} h={12}><path d="M1 1h12v10H1z" /><F d="m2 10 3-5 2 2 2-1 3 4zM8 3h2v2H8z" /></I></IconBtn>
                    <IconBtn aria-label="调整"><I s={12}><circle cx="6" cy="6" r="5" /><F d="M2.500 9.500 9.500 2.500A5 5 0 0 0 2.500 9.500z" /></I></IconBtn>
                    <IconBtn aria-label="文字"><SerifT $s={16} $bold>T</SerifT></IconBtn>
                    <IconBtn aria-label="形状"><I s={12}><path d="M2 2h8v8H2z" /><F d="M0 0h3v3H0zM9 0h3v3H9zM0 9h3v3H0zM9 9h3v3H9z" /></I></IconBtn>
                    <IconBtn aria-label="智能对象"><I s={12} h={13}><path d="M4 6V1h5l2 2v8H7" strokeWidth="1.200" /><F d="M0 6h6v7H0z" /></I></IconBtn>
                  </IconRow>
                  <FilterSwitch aria-label="筛选开关" />
                </Bar>
                <Bar $h={28}>
                  <Select label="混合模式" w={111} value="正常" />
                  <FieldLabel htmlFor="opacity">不透明度:</FieldLabel>
                  <Percent><input id="opacity" defaultValue="100%" /><PercentDrop aria-label="不透明度滑块"><Down /></PercentDrop></Percent>
                </Bar>
                <Bar $h={30}>
                  <Row $pad={2}>锁定:</Row>
                  <LockRow $gap={7}>
                    <IconBtn $faint aria-label="锁定透明"><I s={12}><F d="M0 0h12v12H0z" opacity=".5" /><F d="M0 0h3v3H0zM6 0h3v3H6zM3 3h3v3H3zM9 3h3v3H9zM0 6h3v3H0zM6 6h3v3H6zM3 9h3v3H3zM9 9h3v3H9z" /></I></IconBtn>
                    <IconBtn $faint aria-label="锁定像素"><I s={16} h={14}><path d="m15 1-7 7" strokeWidth="2" /><F d="M0 12c3 0 3-4 6-4s3 5-6 4z" /></I></IconBtn>
                    <IconBtn aria-label="锁定位置"><I s={14}><path d="M7 2v10M2 7h10" /><F d="m7 0 3 3H4zM7 14l3-3H4zM0 7l3-3v6zM14 7l-3-3v6z" /></I></IconBtn>
                    <IconBtn aria-label="锁定全部"><LockIcon /></IconBtn>
                  </LockRow>
                  <FieldLabel htmlFor="fill">填充:</FieldLabel>
                  <Percent><input id="fill" defaultValue="100%" /><PercentDrop aria-label="填充滑块"><Down /></PercentDrop></Percent>
                </Bar>
                <LayerArea>
                  <LayerList>
                    <Layer $on><Eye aria-label="可见"><EyeIcon /></Eye><LayerMain><Thumb $on><SerifT $s={16}>T</SerifT></Thumb><LayerName>这里是举例文本</LayerName></LayerMain></Layer>
                    <Layer><Eye aria-label="可见"><EyeIcon /></Eye><LayerMain><Thumb><SerifT $s={16}>T</SerifT></Thumb><LayerName>图层 1</LayerName></LayerMain></Layer>
                    <Layer><Eye aria-label="可见"><EyeIcon /></Eye><LayerMain><PictureThumb><WhiteThumb /></PictureThumb><LayerName $italic>背景</LayerName><LockIcon /></LayerMain></Layer>
                  </LayerList>
                  <LayerScroll />
                </LayerArea>
                <LayerFoot>
                  <IconBtn $faint aria-label="链接"><I s={14} h={8}><path d="M6 1H4a3 3 0 0 0 0 6h2M8 1h2a3 3 0 0 1 0 6H8M4 4h6" /></I></IconBtn>
                  <IconBtn aria-label="图层样式"><Fx>fx</Fx></IconBtn>
                  <IconBtn aria-label="蒙版"><I s={14} h={11}><F d="M0 0h14v11H0z" /><circle cx="7" cy="5.500" r="2.500" fill="#555" stroke="none" /></I></IconBtn>
                  <IconBtn aria-label="调整图层"><I s={12}><circle cx="6" cy="6" r="5" /><F d="M2.500 9.500 9.500 2.500A5 5 0 0 0 2.500 9.500z" /></I></IconBtn>
                  <IconBtn aria-label="新建组"><I s={13} h={10}><F d="M0 0h5l1 2h7v8H0z" /></I></IconBtn>
                  <IconBtn aria-label="新建图层"><I s={11}><F d="M0 0h11v11H5V6H0z" /><F d="M0 7h4v4z" /></I></IconBtn>
                  <IconBtn aria-label="删除"><I s={12}><path d="M0 2.500h12M4 1h4M2 3l.5 8h7l.5-8M4.500 4v6M7.500 4v6" /></I></IconBtn>
                </LayerFoot>
              </LayersPanel>
            </Panels>
          </DockBody>
        </Dock>
      </Workspace>

      <Taskbar><TaskTile /><Clock>14:33</Clock><ShowDesktop /></Taskbar>

      <ContextMenu role="menu">
        <MenuItem role="menuitem">混合选项...</MenuItem>
        <MenuRule />
        {effects.map((e, i) => <MenuItem key={e} role="menuitem" $on={i === 1}>{e}</MenuItem>)}
      </ContextMenu>

      <Cursor width="13" height="20" viewBox="0 0 13 20"><path d="M1 1v15l3.500-3.300L7 18.500l2.500-1L7 12h5z" fill="#fff" stroke="#223" /></Cursor>

      <Ime>CH<I s={11}><path d="M4 1c5 1 7 6 3 9-2 .5-4 0-6-1 4 0 6-4 3-8z" stroke="#444" strokeWidth="1.200" /></I>简</Ime>

      <Watermark>
        <svg width="44" height="42" viewBox="0 0 44 42">
          <path d="M1 31C-1 14 17-1 39 3 20 4 9 12 10 22c0 4-4 8-9 9z" fill="#3a8fd0" opacity=".8" />
          <path d="M12 20c3-9 15-12 23-8-9-1-17 3-16 8 1 4 7 4 8 0 1 7-13 12-15 0z" fill="#7cc0ea" opacity=".8" />
          <path d="M3 37c12 2 32-5 34-21 8 12-8 27-25 26-3 0-6-2-9-5z" fill="#5aa85a" opacity=".8" />
          <path d="M5 37c8-2 14-6 18-12-1 8-6 13-13 14z" fill="#d8c840" opacity=".8" />
        </svg>
        <WaterText><WaterName>极光下载站</WaterName><WaterUrl>www.xz7.com</WaterUrl></WaterText>
      </Watermark>

      <Annotations width="420" height="600" viewBox="0 0 420 600">
        <Arrow x1={7} y1={22} x2={202} y2={16} />
        <Arrow x1={176} y1={390} x2={264} y2={382} />
        <Arrow x1={136} y1={517} x2={247} y2={582} />
      </Annotations>
    </App>
  );
}
